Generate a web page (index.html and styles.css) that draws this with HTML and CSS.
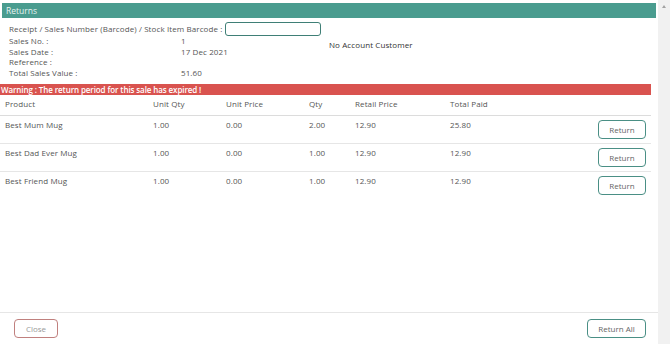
FILE: index.html
```html
<!DOCTYPE html>
<html>
<head>
<meta charset="utf-8">
<link rel="stylesheet" href="styles.css">
</head>
<body>
<div class="page">
  <div class="main">
    <div class="title">Returns</div>
    <div class="info">
      <div class="barcode-row">
        <span class="label">Receipt / Sales Number (Barcode) / Stock Item Barcode :</span>
        <input class="barcode" type="text">
      </div>
      <div class="details">
        <div class="grid">
          <span>Sales No. :</span><span>1</span>
          <span>Sales Date :</span><span>17 Dec 2021</span>
          <span>Reference :</span><span></span>
          <span>Total Sales Value :</span><span>51.60</span>
        </div>
        <div class="customer">No Account Customer</div>
      </div>
    </div>
    <div class="warning">Warning : The return period for this sale has expired !</div>
    <table class="items">
      <thead>
        <tr><th class="c1">Product</th><th class="c2">Unit Qty</th><th class="c3">Unit Price</th><th class="c4">Qty</th><th class="c5">Retail Price</th><th class="c6">Total Paid</th><th class="c7"></th></tr>
      </thead>
      <tbody>
        <tr><td>Best Mum Mug</td><td>1.00</td><td>0.00</td><td>2.00</td><td>12.90</td><td>25.80</td><td class="act"><button class="btn teal">Return</button></td></tr>
        <tr><td>Best Dad Ever Mug</td><td>1.00</td><td>0.00</td><td>1.00</td><td>12.90</td><td>12.90</td><td class="act"><button class="btn teal">Return</button></td></tr>
        <tr class="last"><td>Best Friend Mug</td><td>1.00</td><td>0.00</td><td>1.00</td><td>12.90</td><td>12.90</td><td class="act"><button class="btn teal">Return</button></td></tr>
      </tbody>
    </table>
    <div class="spacer"></div>
    <div class="footer">
      <button class="btn red close">Close</button>
      <button class="btn teal all">Return All</button>
    </div>
  </div>
  <div class="scrollbar"><div class="arrow"></div></div>
</div>
</body>
</html>
```

FILE: styles.css
```css
html, body {
  margin: 0;
  padding: 0;
  background: #fff;
}
body {
  font-family: "Open Sans", "Liberation Sans", sans-serif;
  font-size: 8px;
  letter-spacing: 0.1px;
  color: #555;
}
.page {
  display: flex;
  width: 670px;
  height: 344px;
  overflow: hidden;
}
.main {
  flex: 1;
  display: flex;
  flex-direction: column;
  min-width: 0;
}
.scrollbar {
  width: 12px;
  background: #f1f1f1;
  display: flex;
  justify-content: center;
}
.arrow {
  margin-top: 5px;
  width: 0;
  height: 0;
  border-left: 2.5px solid transparent;
  border-right: 2.5px solid transparent;
  border-bottom: 3px solid #a3a3a3;
}
.title {
  margin: 3px 2px 0 2px;
  height: 15px;
  line-height: 15px;
  background: #4a9c8f;
  color: #e8f3f1;
  font-size: 8.5px;
  letter-spacing: 0;
  padding-left: 4px;
}
.info {
  padding: 3px 0 0 9px;
}
.barcode-row {
  display: flex;
  align-items: center;
  height: 15px;
}
.label {
  margin-right: 3px;
}
.barcode {
  width: 94px;
  height: 12px;
  border: 1px solid #3f7f76;
  border-radius: 3px;
  padding: 0;
  margin: 0;
  outline: none;
}
.details {
  display: flex;
  margin-top: 0;
}
.grid {
  display: grid;
  grid-template-columns: 172px 148px;
  grid-auto-rows: 10.7px;
  line-height: 10.7px;
}
.customer {
  margin-top: 3px;
  color: #333;
}
.warning {
  margin-top: 5px;
  margin-right: 7px;
  height: 11px;
  line-height: 11px;
  background: #d9534f;
  color: #fff;
  font-weight: 600;
  letter-spacing: -0.1px;
  padding-left: 1px;
}
.items {
  border-collapse: collapse;
  width: 651px;
  table-layout: fixed;
}
.items th, .items td {
  text-align: left;
  font-weight: normal;
  padding: 0 0 0 5px;
  vertical-align: top;
}
.items th {
  height: 20px;
  line-height: 18px;
  border-bottom: 1px solid #dcdcdc;
}
.items td {
  height: 28px;
  padding-top: 3px;
  box-sizing: border-box;
  border-bottom: 1px solid #e6e6e6;
}
.items tr.last td {
  border-bottom: none;
}
.c1 { width: 143px; }
.c2 { width: 68px; }
.c3 { width: 78px; }
.c4 { width: 41px; }
.c5 { width: 90px; }
.c6 { width: 140px; }
.items td.act {
  text-align: right;
  padding: 4px 5px 0 0;
}
.btn {
  font-family: inherit;
  font-size: 8px;
  color: #666;
  background: #fff;
  border-radius: 4px;
  padding: 0;
  height: 19px;
  cursor: pointer;
}
.btn.teal {
  border: 1px solid #4a8f85;
}
.btn.red {
  border: 1px solid #c0807e;
  color: #999;
}
.items .btn {
  width: 48px;
}
.spacer {
  flex: 1;
}
.footer {
  border-top: 1px solid #e6e6e6;
  height: 32px;
  display: flex;
  align-items: flex-start;
  justify-content: space-between;
  padding: 6px 12px 0 14px;
  box-sizing: border-box;
}
.close {
  width: 44px;
}
.all {
  width: 59px;
}
```
